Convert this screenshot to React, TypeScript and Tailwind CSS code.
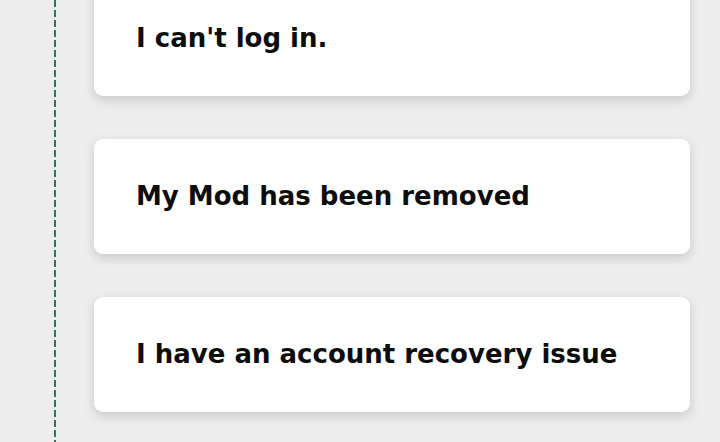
export default function App() {
  const items = ["I can't log in.", "My Mod has been removed", "I have an account recovery issue"];
  return (
    <div className="w-[720px] h-[442px] overflow-hidden bg-[#ededed] flex">
      <div className="w-[94px] shrink-0 flex justify-start pl-[54px]">
        <div className="w-[2px] h-full bg-[repeating-linear-gradient(to_bottom,#2f7556_0px,#2f7556_7px,transparent_7px,transparent_10px)]" />
      </div>
      <div className="w-[596px] flex flex-col gap-[43px] mt-[-19px]">
        {items.map((t) => (
          <div
            key={t}
            className="h-[115px] shrink-0 bg-white rounded-[9px] shadow-[0_4px_12px_rgba(0,0,0,0.16)] flex items-center pl-[42px]"
          >
            <span
              className="text-[26px] font-bold text-[#0d0d0d]"
              style={{ fontFamily: '"DejaVu Sans", sans-serif' }}
            >
              {t}
            </span>
          </div>
        ))}
      </div>
    </div>
  );
}
